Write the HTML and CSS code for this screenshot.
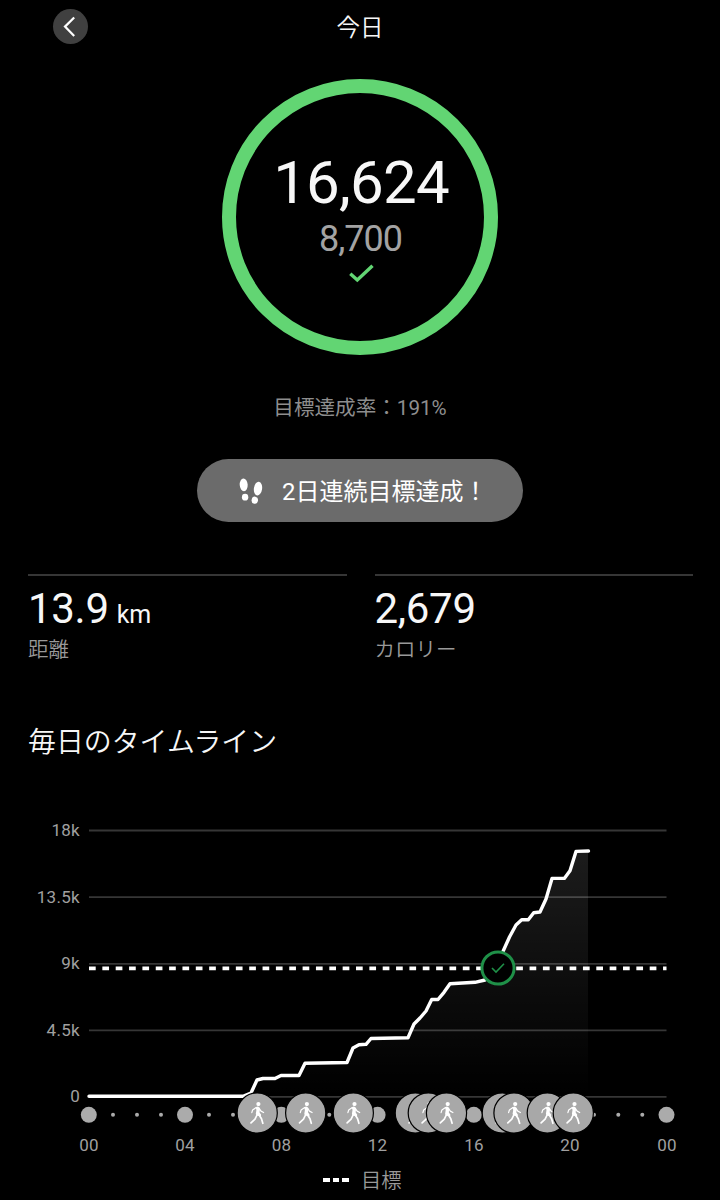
FILE: index.html
```html
<!DOCTYPE html>
<html lang="ja">
<head>
    <meta charset="UTF-8">
    <meta name="viewport" content="width=device-width, initial-scale=1.0">
    <title>今日</title>
    <link rel="stylesheet" href="styles.css">
</head>
<body>
    <header class="header">
        <button class="back" aria-label="戻る">
            <svg width="35" height="35" viewBox="0 0 35 35"><path d="M21.2 8.5 L12 17.6 L21.2 27"/></svg>
        </button>
        <h1>今日</h1>
    </header>

    <div class="ring">
        <div class="steps">16,624</div>
        <div class="goal">8,700</div>
        <svg class="check" width="26" height="20" viewBox="0 0 26 20"><path d="M2.3 10.7 L9.3 17 L24.5 2.7"/></svg>
    </div>
    <p class="rate">目標達成率：191%</p>

    <div class="streak">
        <svg width="26" height="28" viewBox="0 0 26 28">
            <ellipse cx="5.7" cy="7.8" rx="4" ry="6.4" transform="rotate(-3 5.7 7.8)"/>
            <ellipse cx="7.1" cy="20.2" rx="3.2" ry="3.4"/>
            <ellipse cx="20" cy="11.6" rx="4.1" ry="6.9" transform="rotate(8 20 11.6)"/>
            <ellipse cx="16.8" cy="23.2" rx="3.2" ry="3.6" transform="rotate(10 16.8 23.2)"/>
        </svg>
        <span>2日連続目標達成！</span>
    </div>

    <div class="stats">
        <div class="stat">
            <div class="value">13.9 <small>km</small></div>
            <div class="label">距離</div>
        </div>
        <div class="stat">
            <div class="value">2,679</div>
            <div class="label">カロリー</div>
        </div>
    </div>

    <h2>毎日のタイムライン</h2>

    <svg class="chart" width="720" height="360" viewBox="0 800 720 360">
        <defs>
            <linearGradient id="fade" x1="0" y1="851" x2="0" y2="1096" gradientUnits="userSpaceOnUse">
                <stop offset="0" stop-color="#fff" stop-opacity="0.11"/>
                <stop offset="1" stop-color="#fff" stop-opacity="0"/>
            </linearGradient>
            <g id="walk">
                <circle class="disc" r="20.1"/>
                <circle class="head" cx="1.2" cy="-8.9" r="2.1"/>
                <path class="torso" d="M-1.6 -5.8 L0.4 -6.4 L2.3 -5.6 L2.8 -3.4 L2.3 -0.8 L3.9 1.8 L3.6 3.6 L-0.6 2.6 L-1.4 1 L-0.8 -3 Z"/>
                <path class="limb" d="M-1 -5.4 L-4.6 -3 L-5.4 -0.4 M2 -4.6 L3.8 -1.9 L6.4 -0.5"/>
                <path class="limb leg" d="M-0.2 2 L-2.2 6.2 L-6.2 9.9 M2.4 2.8 L4.3 5.8 L5.6 10.3"/>
            </g>
        </defs>

        <g class="grid">
            <path d="M89 830.5 H666.5 M89 897.2 H666.5 M89 963.8 H666.5 M89 1030.4 H666.5 M89 1096.8 H666.5"/>
        </g>
        <g class="y-axis">
            <text x="80" y="836">18k</text>
            <text x="80" y="902.5">13.5k</text>
            <text x="80" y="969">9k</text>
            <text x="80" y="1035.5">4.5k</text>
            <text x="80" y="1102">0</text>
        </g>

        <path class="area" d="M245 1096 L251 1093 L257 1080 L263 1078.5 L275 1078.5 L281 1075.5 L299 1075.5 L305 1063 L347 1062.5 L353 1048 L359 1044.7 L366 1044.3 L371 1038.5 L408 1037.7 L414 1024 L420 1018 L426 1011 L431.7 999.5 L438 999.5 L444 992.3 L450 983.8 L475 982.3 L485 980 L492 973 L503.3 950.7 L509.5 937 L516 925 L521.7 919.7 L528.3 919.7 L533.7 912.7 L540 912 L546 899 L552 878.4 L564.3 878.4 L570 870.7 L576 851.4 L588 851 L588 1096 Z"/>
        <path class="target" d="M89 968.3 H666.5"/>
        <path class="line" d="M89 1096.3 L243 1096.3 L251 1093 L257 1080 L263 1078.5 L275 1078.5 L281 1075.5 L299 1075.5 L305 1063.3 L347 1062.5 L353 1048 L359 1044.7 L366 1044.3 L371 1038.5 L408 1037.7 L414 1024 L420 1018 L426 1011 L431.7 999.5 L438 999.5 L444 992.3 L450 983.8 L475 982.3 L485 980 L492 973 L503.3 950.7 L509.5 937 L516 925 L521.7 919.7 L528.3 919.7 L533.7 912.7 L540 912 L546 899 L552 878.4 L564.3 878.4 L570 870.7 L576 851.4 L588.5 851"/>

        <g class="badge">
            <circle cx="498" cy="968" r="16.1"/>
            <path d="M492 968 L496 972 L504 963.7"/>
        </g>

        <g class="hours">
            <circle cx="88.8" cy="1114.8" r="8"/>
            <circle cx="113" cy="1114.8" r="2"/>
            <circle cx="137" cy="1114.8" r="2"/>
            <circle cx="161" cy="1114.8" r="2"/>
            <circle cx="185" cy="1114.8" r="8"/>
            <circle cx="209" cy="1114.8" r="2"/>
            <circle cx="233" cy="1114.8" r="2"/>
            <circle cx="281.3" cy="1114.8" r="8"/>
            <circle cx="329.3" cy="1114.8" r="2"/>
            <circle cx="377.6" cy="1114.8" r="8"/>
            <circle cx="473.8" cy="1114.8" r="8"/>
            <circle cx="594" cy="1114.8" r="2"/>
            <circle cx="618.3" cy="1114.8" r="2"/>
            <circle cx="642.3" cy="1114.8" r="2"/>
            <circle cx="666.5" cy="1114.8" r="8"/>
        </g>
        <g class="walks">
            <use href="#walk" x="257.2" y="1113"/>
            <use href="#walk" x="305.7" y="1113"/>
            <use href="#walk" x="353.3" y="1113"/>
            <use href="#walk" x="415.3" y="1113"/>
            <use href="#walk" x="428.3" y="1113"/>
            <use href="#walk" x="446.5" y="1113"/>
            <use href="#walk" x="502.3" y="1113"/>
            <use href="#walk" x="514" y="1113"/>
            <use href="#walk" x="547.3" y="1113"/>
            <use href="#walk" x="573.3" y="1113"/>
        </g>
        <g class="x-axis">
            <text x="89" y="1150.5">00</text>
            <text x="185" y="1150.5">04</text>
            <text x="281.5" y="1150.5">08</text>
            <text x="377.5" y="1150.5">12</text>
            <text x="474" y="1150.5">16</text>
            <text x="570" y="1150.5">20</text>
            <text x="667" y="1150.5">00</text>
        </g>
    </svg>

    <div class="legend">
        <span class="dashes"><i></i><i></i><i></i></span>
        <span>目標</span>
    </div>
</body>
</html>
```
FILE: styles.css
```css
* {
    margin: 0;
    padding: 0;
    box-sizing: border-box;
}
body {
    width: 720px;
    height: 1200px;
    overflow: hidden;
    background: #000;
    color: #f7f7f7;
    font-family: Roboto, "Noto Sans CJK JP", sans-serif;
    display: flex;
    flex-direction: column;
}
body > * {
    flex-shrink: 0;
}
svg {
    display: block;
    flex-shrink: 0;
}
.header {
    display: grid;
    grid-template-columns: 1fr auto 1fr;
    align-items: start;
    height: 54px;
    padding: 9px 53px 0;
}
.back {
    width: 35px;
    height: 35px;
    border: none;
    border-radius: 50%;
    background: #404040;
}
.back path {
    fill: none;
    stroke: #fff;
    stroke-width: 2.2;
}
h1 {
    padding-top: 1px;
    font-size: 23.5px;
    font-weight: 350;
    line-height: 36px;
}
.ring {
    width: 276px;
    height: 276px;
    margin: 25px auto 0 222px;
    padding-top: 55px;
    border: 14px solid #62d573;
    border-radius: 50%;
    display: flex;
    flex-direction: column;
    align-items: center;
}
.steps {
    font-size: 60px;
    line-height: 70px;
    letter-spacing: -0.8px;
    margin-left: 2px;
}
.goal {
    font-size: 36px;
    line-height: 42px;
    letter-spacing: -1px;
    color: #a3a3a3;
    margin-left: 1px;
}
.check {
    margin: 3px 0 0 2px;
}
.check path {
    fill: none;
    stroke: #62d573;
    stroke-width: 3.4;
}
.rate {
    margin-top: 38px;
    font-size: 20.6px;
    line-height: 30px;
    color: #8e8e8e;
    text-align: center;
}
.streak {
    display: flex;
    align-items: center;
    width: 326px;
    height: 63px;
    margin: 36px 0 0 197px;
    padding-left: 41px;
    gap: 18px;
    border-radius: 32px;
    background: #6b6b6b;
    color: #fff;
    font-size: 24px;
    line-height: 36px;
}
.streak svg {
    fill: #fff;
}
.streak span {
    padding-top: 3px;
}
.stats {
    display: grid;
    grid-template-columns: 1fr 1fr;
    gap: 28px;
    margin-top: 52px;
    padding: 0 27px 0 28px;
}
.stat {
    border-top: 2px solid #363636;
    padding-top: 8px;
}
.value {
    height: 51px;
    font-size: 42px;
    line-height: 50px;
    letter-spacing: -0.3px;
}
.value small {
    font-size: 25px;
    line-height: 1;
    margin-left: -2px;
}
.label {
    font-size: 20.5px;
    font-weight: 350;
    line-height: 30px;
    color: #999;
}
h2 {
    height: 40px;
    margin: 58px 28px 0;
    font-size: 27.9px;
    font-weight: 350;
    line-height: 40px;
}
.chart {
    margin-top: 37px;
}
.chart text {
    fill: #a0a0a0;
    font-size: 17px;
    letter-spacing: 0.3px;
}
.y-axis text {
    text-anchor: end;
}
.x-axis text {
    text-anchor: middle;
}
.grid path {
    stroke: #363636;
    stroke-width: 1.8;
}
.area {
    fill: url(#fade);
}
.line {
    fill: none;
    stroke: #fff;
    stroke-width: 3.4;
    stroke-linejoin: round;
    stroke-linecap: round;
}
.target {
    stroke: #fff;
    stroke-width: 3.8;
    stroke-dasharray: 6.7 6.65;
}
.badge circle {
    fill: #000;
    stroke: #1f9048;
    stroke-width: 3;
}
.badge path {
    fill: none;
    stroke: #1f9048;
    stroke-width: 1.6;
}
.hours circle {
    fill: #ababab;
}
.disc {
    fill: #a8a8a8;
    stroke: #000;
    stroke-width: 1.2;
}
.head, .torso {
    fill: #fff;
}
.limb {
    fill: none;
    stroke: #fff;
    stroke-width: 1.2;
    stroke-linecap: round;
    stroke-linejoin: round;
}
.leg {
    stroke-width: 1.7;
}
.legend {
    display: flex;
    align-items: center;
    gap: 12px;
    margin-left: 323px;
    height: 40px;
    font-size: 20.3px;
    font-weight: 350;
    line-height: 30px;
    color: #999;
}
.legend span:last-child {
    padding-top: 2px;
}
.dashes {
    display: flex;
    gap: 3px;
}
.dashes i {
    width: 6.7px;
    height: 4px;
    background: #fff;
}
```
